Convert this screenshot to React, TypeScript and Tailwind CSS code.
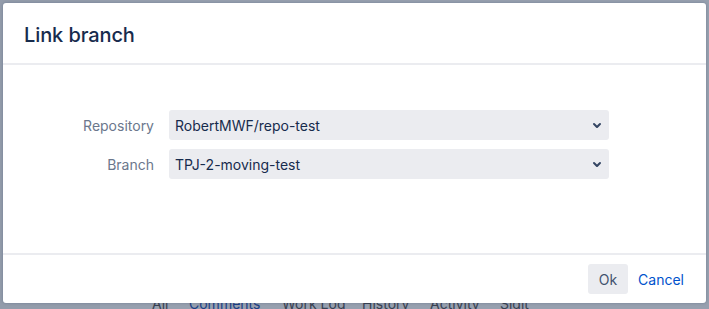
import React from 'react';

const font = { fontFamily: 'Inter, "Noto Sans", "Liberation Sans", sans-serif' };

const Chevron = () => (
  <svg width="24" height="24" viewBox="0 0 24 24" className="shrink-0 text-[#344563]">
    <path
      fill="currentColor"
      d="M8.292 10.293a1.009 1.009 0 0 0 0 1.419l2.939 2.965c.218.215.5.322.779.322s.556-.107.769-.322l2.93-2.955a1.01 1.01 0 0 0 0-1.419.987.987 0 0 0-1.406 0l-2.298 2.317-2.307-2.327a.99.99 0 0 0-1.406 0z"
    />
  </svg>
);

const SelectField: React.FC<{ value: string }> = ({ value }) => (
  <div className="h-[30px] w-[440px] bg-[#ebecf0] rounded-[3px] flex items-center justify-between pl-[6px] text-[14px] text-[#172b4d]">
    <span>{value}</span>
    <Chevron />
  </div>
);

// tabs from the page that sits under the modal blanket
const tabs = [
  { label: 'All', left: 152, color: 'text-[#3a4252]' },
  { label: 'Comments', left: 189, color: 'text-[#1d3f86]' },
  { label: 'Work Log', left: 282, color: 'text-[#3a4252]' },
  { label: 'History', left: 362, color: 'text-[#3a4252]' },
  { label: 'Activity', left: 430, color: 'text-[#3a4252]' },
  { label: 'Sigit', left: 500, color: 'text-[#3a4252]' },
];

export default function App() {
  return (
    <div className="relative w-[709px] h-[309px] overflow-hidden bg-[#97a0af] p-[3px]" style={font}>
      <div className="absolute left-0 top-0 bottom-0 w-[100px] bg-[#939cab]" />
      {tabs.map(t => (
        <span
          key={t.label}
          className={`absolute top-[294px] text-[14px] leading-[20px] ${t.color}`}
          style={{ left: t.left }}
        >
          {t.label}
        </span>
      ))}

      <div className="relative z-10 h-[300px] bg-white rounded-[3px] shadow-[0_0_3px_rgba(9,30,66,0.25)] flex flex-col">
        <header className="h-[62px] border-b-2 border-[#ebecf0] flex items-center pl-[21px] pt-[3px]">
          <h1 className="text-[20px] font-medium text-[#172b4d] tracking-[-0.1px]">Link branch</h1>
        </header>

        <section className="flex-1 pt-[45px]">
          <div className="grid grid-cols-[151px_440px] gap-x-[15px] gap-y-[9px] items-center">
            <label className="text-right text-[14px] text-[#6b778c]">Repository</label>
            <SelectField value="RobertMWF/repo-test" />
            <label className="text-right text-[14px] text-[#6b778c]">Branch</label>
            <SelectField value="TPJ-2-moving-test" />
          </div>
        </section>

        <footer className="h-[50px] border-t-2 border-[#ebecf0] flex items-center justify-end pr-[22px]">
          <button className="h-[30px] px-[11px] rounded-[3px] bg-[#ebecf0] text-[14px] text-[#42526e]">Ok</button>
          <button className="ml-[10px] h-[30px] text-[14px] text-[#0052cc]">Cancel</button>
        </footer>
      </div>
    </div>
  );
}
